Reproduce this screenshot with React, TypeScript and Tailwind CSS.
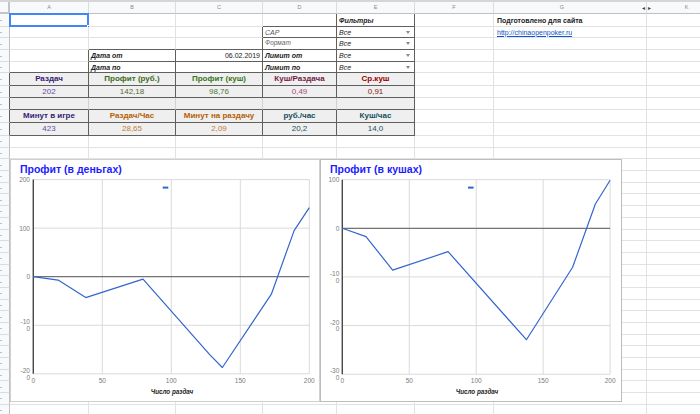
import React from 'react';

type P = [number, number];

const COLW = ['w-[79px]', 'w-[87px]', 'w-[87px]', 'w-[74px]', 'w-[78px]', 'w-[79px]', 'w-[153px]', 'w-[80px]'];
const LETTERS = ['A', 'B', 'C', 'D', 'E', 'F', 'G', 'K'];
const ROWH = [
  'h-[13px]', 'h-[11px]', 'h-[12px]', 'h-[12px]', 'h-[11px]',
  'h-[13px]', 'h-[12px]', 'h-[12px]', 'h-[13px]', 'h-[13px]',
];
const TOTAL_ROWS = 36;

// which gridlines of the sheet carry a dark border
function darkR(r: number, c: number) {
  if (r === 1) return c === 3 || c === 4;
  if (r >= 2 && r <= 5) return c === 2 || c === 3 || c === 4 || (r >= 4 && (c === 0 || c === 1));
  if (r >= 6 && r <= 10) return c <= 4;
  return false;
}

function darkB(r: number, c: number) {
  if (r >= 1 && r <= 4 && (c === 3 || c === 4)) return true;
  if ((r === 3 || r === 4) && (c === 1 || c === 2)) return true;
  if (r >= 5 && r <= 10 && c <= 4) return true;
  return false;
}

function Pick() {
  return (
    <>
      <span className="italic text-[7px] text-[#222]">Все</span>
      <span className="ml-auto mr-[2px] border-x-[2px] border-t-[3px] border-x-transparent border-t-[#8a8a8a]" />
    </>
  );
}

const hdr = 'justify-center font-bold text-[8px]';
const val = 'justify-center text-[8px]';
const lbl = 'italic font-bold text-[7px] text-[#222]';

const CONTENT: Record<string, { node: React.ReactNode; cls: string }> = {
  '1,4': { node: 'Фильтры', cls: lbl },
  '1,6': { node: 'Подготовлено для сайта', cls: 'font-bold text-[7px] text-[#222] pl-[3px]' },
  '2,3': { node: 'CAP', cls: 'italic text-[7px] text-[#555]' },
  '2,4': { node: <Pick />, cls: '' },
  '2,6': {
    node: <span className="underline text-[#1155cc]">http://chinaopenpoker.ru</span>,
    cls: 'text-[7px] pl-[3px]',
  },
  '3,3': { node: 'Формат', cls: 'italic text-[6.5px] text-[#666]' },
  '3,4': { node: <Pick />, cls: '' },
  '4,1': { node: 'Дата от', cls: lbl },
  '4,2': { node: '06.02.2019', cls: 'justify-end text-[7px] text-[#222]' },
  '4,3': { node: 'Лимит от', cls: lbl },
  '4,4': { node: <Pick />, cls: '' },
  '5,1': { node: 'Дата по', cls: lbl },
  '5,3': { node: 'Лимит по', cls: lbl },
  '5,4': { node: <Pick />, cls: '' },
  '6,0': { node: 'Раздач', cls: `${hdr} text-[#351c75]` },
  '6,1': { node: 'Профит (руб.)', cls: `${hdr} text-[#3d6b1c]` },
  '6,2': { node: 'Профит (куш)', cls: `${hdr} text-[#38761d]` },
  '6,3': { node: 'Куш/Раздача', cls: `${hdr} text-[#741b47]` },
  '6,4': { node: 'Ср.куш', cls: `${hdr} text-[#990000]` },
  '7,0': { node: '202', cls: `${val} text-[#674ea7]` },
  '7,1': { node: '142,18', cls: `${val} text-[#536b2e]` },
  '7,2': { node: '98,76', cls: `${val} text-[#4f7a35]` },
  '7,3': { node: '0,49', cls: `${val} text-[#a64d79]` },
  '7,4': { node: '0,91', cls: `${val} text-[#85200c]` },
  '9,0': { node: 'Минут в игре', cls: `${hdr} text-[#351c75]` },
  '9,1': { node: 'Раздач/Час', cls: `${hdr} text-[#b45f06]` },
  '9,2': { node: 'Минут на раздачу', cls: `${hdr} text-[#b45f06]` },
  '9,3': { node: 'руб./час', cls: `${hdr} text-[#134f5c]` },
  '9,4': { node: 'Куш/час', cls: `${hdr} text-[#134f5c]` },
  '10,0': { node: '423', cls: `${val} text-[#674ea7]` },
  '10,1': { node: '28,65', cls: `${val} text-[#c27c3e]` },
  '10,2': { node: '2,09', cls: `${val} text-[#c27c3e]` },
  '10,3': { node: '20,2', cls: `${val} text-[#1f4f5c]` },
  '10,4': { node: '14,0', cls: `${val} text-[#1f4f5c]` },
};

function Cell({ r, c }: { r: number; c: number }) {
  const spec = CONTENT[`${r},${c}`];
  let rc = 'border-r-[#e2e2e2]';
  if (r === 8 && c < 4) rc = 'border-r-[#d2d2d2]';
  else if (darkR(r, c)) rc = 'border-r-[#5f5f5f]';
  const bc = darkB(r, c) ? 'border-b-[#5f5f5f]' : 'border-b-[#e2e2e2]';
  const bg = r >= 6 && r <= 10 && c <= 4 ? 'bg-[#efefef]' : 'bg-white';
  return (
    <div
      className={`relative shrink-0 ${COLW[c]} h-full border-r border-b ${rc} ${bc} ${bg} flex items-center px-[2px] overflow-visible whitespace-nowrap ${spec ? spec.cls : ''}`}
    >
      {spec?.node}
      {r === 1 && c === 0 && (
        <>
          <div className="absolute left-[-1px] top-[-1px] right-[-1px] bottom-[-1px] border-2 border-[#4285f4]" />
          <div className="absolute right-[-3px] bottom-[-3px] w-[4px] h-[4px] bg-[#4285f4] border border-white" />
        </>
      )}
    </div>
  );
}

function Row({ r }: { r: number }) {
  const h = r <= 10 ? ROWH[r - 1] : 'h-[11.7px]';
  const rh = r >= 6 && r <= 10 ? 'border-r-[#5f5f5f]' : 'border-r-[#c0c0c0]';
  return (
    <div className={`flex ${h}`}>
      <div className={`relative shrink-0 w-[10px] h-full bg-[#f8f9fa] border-r border-b ${rh} border-b-[#dcdcdc]`}>
        <span className="absolute left-0 top-1/2 w-[2px] h-[1px] bg-[#a9c1e3]" />
      </div>
      {COLW.map((_, c) => (
        <Cell key={c} r={r} c={c} />
      ))}
    </div>
  );
}

function HeaderRow() {
  return (
    <div className="flex h-[14px] border-t-2 border-t-[#d6d6d6] bg-[#f8f9fa]">
      <div className="shrink-0 w-[10px] h-full border-r-2 border-b-2 border-[#c4c4c4]" />
      {LETTERS.map((l, c) => (
        <div
          key={l}
          className={`relative shrink-0 ${COLW[c]} h-full border-r border-b border-r-[#dcdcdc] border-b-[#c0c0c0] flex items-center justify-center text-[5.5px] text-[#8a8a8a] ${c === 6 ? 'pr-[16px]' : ''}`}
        >
          {l}
          {c === 6 && <span className="absolute right-[1px] text-[6px] text-[#444]">◂</span>}
          {c === 7 && <span className="absolute left-[1px] text-[6px] text-[#444]">▸</span>}
        </div>
      ))}
    </div>
  );
}

type ChartCfg = {
  box: string;
  left: number;
  width: number;
  title: string;
  xs: number[];
  ys: number[];
  zeroY: number;
  yLabels: string[][];
  labelX: number;
  pts: P[];
  legendX: number;
  titleX: number;
};

const c1x = (d: number) => 33.3 + d * 1.38;
const c1y = (v: number) => 276.7 - v * 0.4855;
const c2x = (d: number) => 342.3 + d * 1.339;
const c2y = (v: number) => 228.3 - v * 0.4865;

const CHART1: ChartCfg = {
  box: 'left-[10px] w-[310px] border-[#d0d0d0]',
  left: 10,
  width: 310,
  title: 'Профит (в деньгах)',
  xs: [0, 50, 100, 150, 200].map(c1x),
  ys: [200, 100, 0, -100, -200].map(c1y),
  zeroY: c1y(0),
  yLabels: [['200'], ['100'], ['0'], ['-10', '0'], ['-20', '0']],
  labelX: 30,
  pts: ([
    [0, 0], [18, -7], [38, -43], [79.5, -5], [128, -161], [137, -187],
    [172.5, -36], [189, 95], [200, 142.18],
  ] as P[]).map(([d, v]) => [c1x(d), c1y(v)] as P),
  legendX: 162.7,
  titleX: 172,
};

const CHART2: ChartCfg = {
  box: 'left-[320px] w-[302px] border-[#bdbdbd]',
  left: 320,
  width: 302,
  title: 'Профит (в кушах)',
  xs: [0, 50, 100, 150, 200].map(c2x),
  ys: [100, 0, -100, -200, -300].map(c2y),
  zeroY: c2y(0),
  yLabels: [['100'], ['0'], ['-10', '0'], ['-20', '0'], ['-30', '0']],
  labelX: 339.3,
  pts: ([
    [0, 0], [17.7, -17], [37.6, -86], [79, -48], [137.5, -229], [172, -80],
    [189, 50], [200, 98.76],
  ] as P[]).map(([d, v]) => [c2x(d), c2y(v)] as P),
  legendX: 468,
  titleX: 477,
};

function Chart({ cfg }: { cfg: ChartCfg }) {
  const top = cfg.ys[0];
  const bottom = cfg.ys[cfg.ys.length - 1];
  const x0 = cfg.xs[0];
  const x1 = cfg.xs[cfg.xs.length - 1];
  const font = { fontFamily: "'Liberation Sans', Arial, sans-serif" };
  return (
    <div className={`absolute top-[159px] h-[243px] border bg-white flex flex-col ${cfg.box}`}>
      <div className="h-[15px] pl-[9px] pt-[4px] text-[10.5px] leading-[11px] font-bold text-[#1c1cff]">
        {cfg.title}
      </div>
      <svg
        width={cfg.width - 2}
        height={226}
        viewBox={`${cfg.left + 1} 175 ${cfg.width - 2} 226`}
        style={font}
      >
        {cfg.ys.map((y, i) => (
          <line key={`h${i}`} x1={x0} x2={x1} y1={y} y2={y} stroke="#dadada" strokeWidth={1} />
        ))}
        {cfg.xs.map((x, i) => (
          <line key={`v${i}`} x1={x} x2={x} y1={top} y2={bottom} stroke="#dadada" strokeWidth={1} />
        ))}
        <line x1={x0} x2={x1} y1={cfg.zeroY} y2={cfg.zeroY} stroke="#5a5a5a" strokeWidth={1} />
        <line x1={x0} x2={x0} y1={top} y2={bottom} stroke="#4a4a4a" strokeWidth={1.4} />
        <polyline
          points={cfg.pts.map(([x, y]) => `${x},${y}`).join(' ')}
          fill="none"
          stroke="#3366cc"
          strokeWidth={1.2}
          strokeLinejoin="round"
        />
        <rect x={cfg.legendX} y={186.6} width={5.6} height={2} fill="#3366cc" />
        {cfg.yLabels.map((t, i) =>
          t.length === 1 ? (
            <text key={`yl${i}`} x={cfg.labelX} y={cfg.ys[i]} textAnchor="end" dominantBaseline="central" fontSize={6.5} fill="#7a7a7a">
              {t[0]}
            </text>
          ) : (
            <g key={`yl${i}`}>
              <text x={cfg.labelX} y={cfg.ys[i] - 3.4} textAnchor="end" dominantBaseline="central" fontSize={6.5} fill="#7a7a7a">
                {t[0]}
              </text>
              <text x={cfg.labelX} y={cfg.ys[i] + 3.2} textAnchor="end" dominantBaseline="central" fontSize={6.5} fill="#7a7a7a">
                {t[1]}
              </text>
            </g>
          ),
        )}
        {['0', '50', '100', '150', '200'].map((t, i) => (
          <text key={`xl${i}`} x={cfg.xs[i]} y={380.5} textAnchor="middle" dominantBaseline="central" fontSize={6.5} fill="#7a7a7a">
            {t}
          </text>
        ))}
        <text x={cfg.titleX} y={391.7} textAnchor="middle" dominantBaseline="central" fontSize={6.3} fontStyle="italic" fontWeight={700} fill="#222">
          Число раздач
        </text>
      </svg>
    </div>
  );
}

export default function App() {
  return (
    <div className="relative w-[700px] h-[414px] overflow-hidden bg-white font-['Liberation_Sans',Arial,sans-serif] leading-none">
      <HeaderRow />
      {Array.from({ length: TOTAL_ROWS }, (_, i) => (
        <Row key={i} r={i + 1} />
      ))}
      <Chart cfg={CHART1} />
      <Chart cfg={CHART2} />
    </div>
  );
}
